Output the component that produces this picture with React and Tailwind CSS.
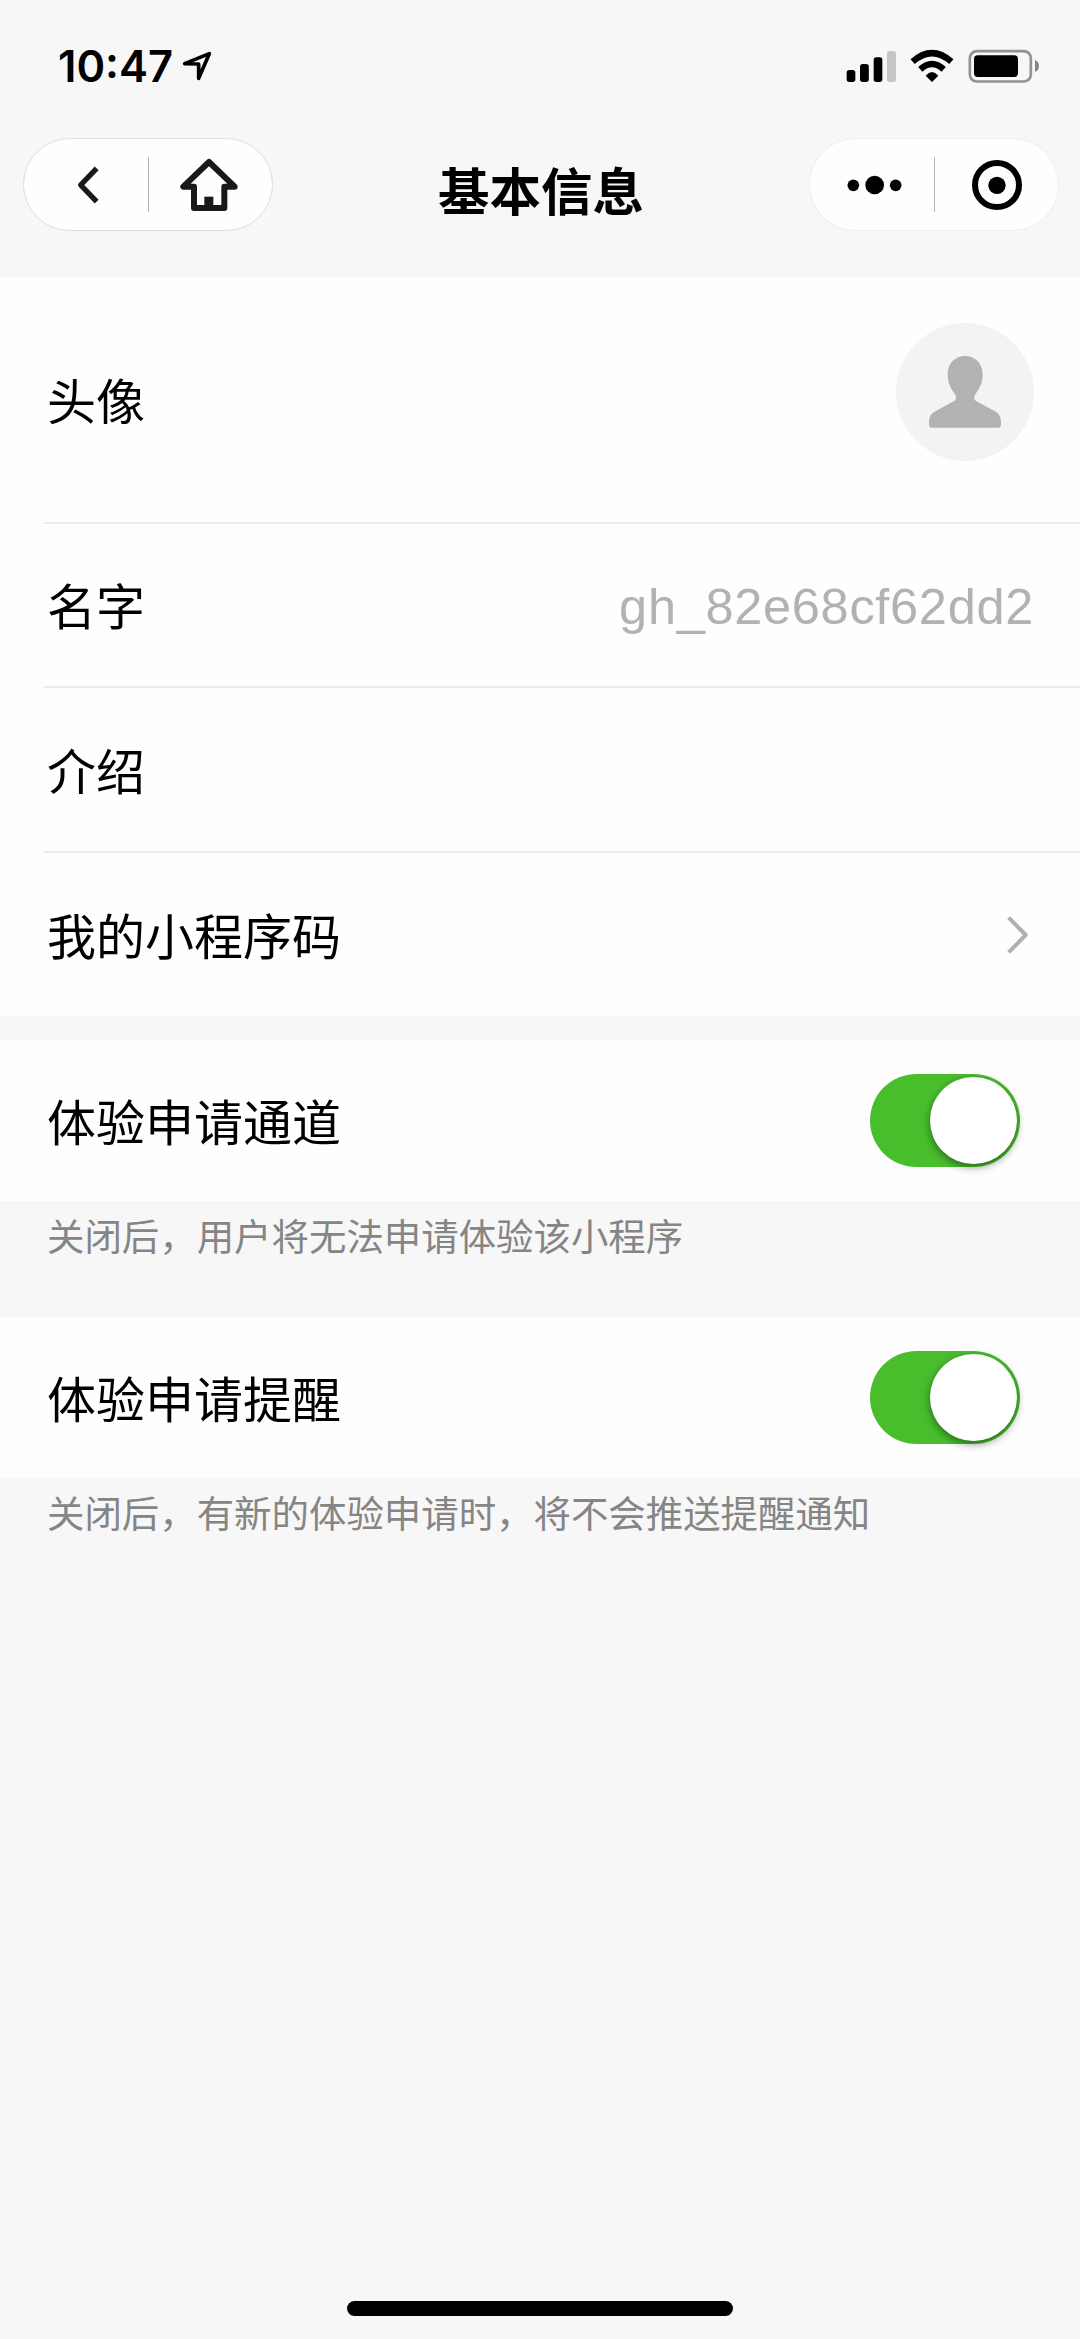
import React from "react";

function LocationArrow() {
  return (
    <svg className="h-8 w-[33px]" viewBox="543 90 99 96" fill="none" stroke="#000" strokeWidth="11" strokeLinejoin="round">
      <path d="M554 131 L628 101 L596 175 L596 132 Z" />
    </svg>
  );
}

function StatusIcons() {
  return (
    <svg className="h-[38px] w-[196px]" viewBox="192 81 588 114" fill="#000">
      <rect x="200" y="150" width="26" height="36" rx="8" />
      <rect x="240" y="132" width="26.5" height="54" rx="8" />
      <rect x="281" y="112" width="26" height="74" rx="8" />
      <rect x="321" y="93" width="27" height="93" rx="8" fill="#c6c6c6" />
      <g fill="none" stroke="#000" strokeWidth="19">
        <path d="M398 125 Q456 74 514 125" />
        <path d="M421 148 Q456 116 491 148" />
      </g>
      <path d="M437 167 Q456 145 475 167 L456 186 Z" />
      <rect x="569.5" y="93.5" width="183" height="91" rx="21" fill="none" stroke="#929292" strokeWidth="8" />
      <rect x="582" y="106" width="132" height="65" rx="11" />
      <path d="M765 120 Q777 125 777 138 Q777 151 765 156 Z" fill="#858585" />
    </svg>
  );
}

function BackIcon() {
  return (
    <svg className="h-10 w-6" viewBox="228 433 72 120" fill="none" stroke="#191919" strokeWidth="16" strokeLinejoin="round">
      <path d="M290 443 L242 493 L290 543" />
    </svg>
  );
}

function HomeIcon() {
  return (
    <svg className="h-[54px] w-[60px]" viewBox="538 412 180 162" fill="none" stroke="#191919" strokeWidth="18" strokeLinejoin="round">
      <path d="M628 424 L551 498 L583 498 L583 562 L674 562 L674 498 L705 498 Z" />
      <rect x="614" y="528" width="27" height="30" fill="#191919" stroke="none" />
    </svg>
  );
}

function Capsule({ className, divider, children }) {
  return (
    <div className={`relative flex h-[93px] w-[250px] items-center rounded-full border-[1.5px] bg-[#fefefe] ${className}`}>
      {children}
      <span className={`absolute top-[18px] h-[55px] w-px bg-[#b5b5b5] ${divider}`} />
    </div>
  );
}

function PersonIcon() {
  return (
    <svg className="h-[72px] w-[72px]" viewBox="206 167 216 216" fill="#b2b2b2">
      <path d="M314 167 C344 167 367 189 367 222 C367 251 355 267 344 284 C340 291 341 298 347 302 L404 333 C419 342 422 352 422 370 Q422 382 414 382 H214 Q206 382 206 370 C206 352 209 342 225 333 L282 302 C288 298 289 291 285 284 C274 267 262 251 262 222 C262 189 285 167 314 167 Z" />
    </svg>
  );
}

function Chevron() {
  return (
    <svg className="h-10 w-6" viewBox="496 106 72 120" fill="none" stroke="#b0b0b0" strokeWidth="12" strokeLinejoin="round">
      <path d="M504 114 L555 166 L504 218" />
    </svg>
  );
}

function Row({ label, height, border = true, children }) {
  return (
    <div className={`ml-[44px] flex items-center justify-between pr-[46px] ${height} ${border ? "border-b-2 border-[#ececec]" : ""}`}>
      <span className="ml-[3px] pb-[3px] text-[49px] leading-none text-black">{label}</span>
      {children}
    </div>
  );
}

function Toggle() {
  return (
    <span className="mr-3.5 flex h-[93px] w-[150px] items-center justify-end rounded-full bg-[#48be2d] pr-[3px]">
      <span className="h-[87px] w-[87px] rounded-full bg-white shadow-[0_3px_9px_rgba(0,0,0,0.45)]" />
    </span>
  );
}

function Hint({ children, height }) {
  return <p className={`pl-[47px] pt-[15px] text-[37.44px] leading-[38px] text-[#858585] ${height}`}>{children}</p>;
}

export default function App() {
  return (
    <div className="flex h-[2339px] w-[1080px] flex-col overflow-hidden bg-[#f7f7f7] font-['Noto_Sans_CJK_SC',sans-serif]">
      <header className="h-[277px]">
        <div className="flex h-[138px] items-start justify-between pl-[58px] pr-10">
          <div className="flex items-start">
            <span className="w-[123px] pt-[41px] font-['Inter',sans-serif] text-[43.5px] font-semibold leading-[50px] text-black">10:47</span>
            <span className="pt-[50px]"><LocationArrow /></span>
          </div>
          <span className="pt-[47px]"><StatusIcons /></span>
        </div>
        <div className="grid grid-cols-[1fr_auto_1fr] items-start pl-[23px] pr-[21px]">
          <Capsule className="border-[#dedede]" divider="left-[124px]">
            <span className="ml-[52px]"><BackIcon /></span>
            <span className="ml-[79px]"><HomeIcon /></span>
          </Capsule>
          <h1 className="pt-[25px] text-[51.5px] font-bold leading-[52px] text-black">基本信息</h1>
          <Capsule className="justify-self-end border-[#eeeeee]" divider="left-[124px]">
            <svg className="ml-[37px] h-5 w-14" viewBox="204 465 168 60" fill="#000">
              <circle cx="223" cy="496" r="17.5" />
              <circle cx="287" cy="495" r="28" />
              <circle cx="350" cy="496" r="17.5" />
            </svg>
            <svg className="ml-[68px] h-[52px] w-[52px]" viewBox="574 414 156 156">
              <circle cx="652" cy="492" r="66" fill="none" stroke="#000" strokeWidth="18" />
              <circle cx="652" cy="493" r="26" fill="#000" />
            </svg>
          </Capsule>
        </div>
      </header>

      <section className="bg-[#fefefe]">
        <Row label="头像" height="h-[247px]">
          <span className="mb-[15px] flex h-[138px] w-[138px] items-center justify-center rounded-full bg-[#f3f3f6]">
            <PersonIcon />
          </span>
        </Row>
        <Row label="名字" height="h-[164px]">
          <span className="pt-1 font-['Liberation_Sans',sans-serif] text-[50.5px] leading-none tracking-[0.7px] text-[#b2b2b2]">gh_82e68cf62dd2</span>
        </Row>
        <Row label="介绍" height="h-[165px]" />
        <Row label="我的小程序码" height="h-[163px]" border={false}>
          <span className="mr-1"><Chevron /></span>
        </Row>
      </section>

      <section className="mt-6 bg-[#fefefe]">
        <Row label="体验申请通道" height="h-[161px]" border={false}>
          <Toggle />
        </Row>
      </section>
      <Hint height="h-[116px]">关闭后，用户将无法申请体验该小程序</Hint>

      <section className="bg-[#fefefe]">
        <Row label="体验申请提醒" height="h-[161px]" border={false}>
          <Toggle />
        </Row>
      </section>
      <Hint height="h-[116px]">关闭后，有新的体验申请时，将不会推送提醒通知</Hint>

      <div className="mx-auto mb-[23px] mt-auto h-[15px] w-[386px] rounded-full bg-black" />
    </div>
  );
}
